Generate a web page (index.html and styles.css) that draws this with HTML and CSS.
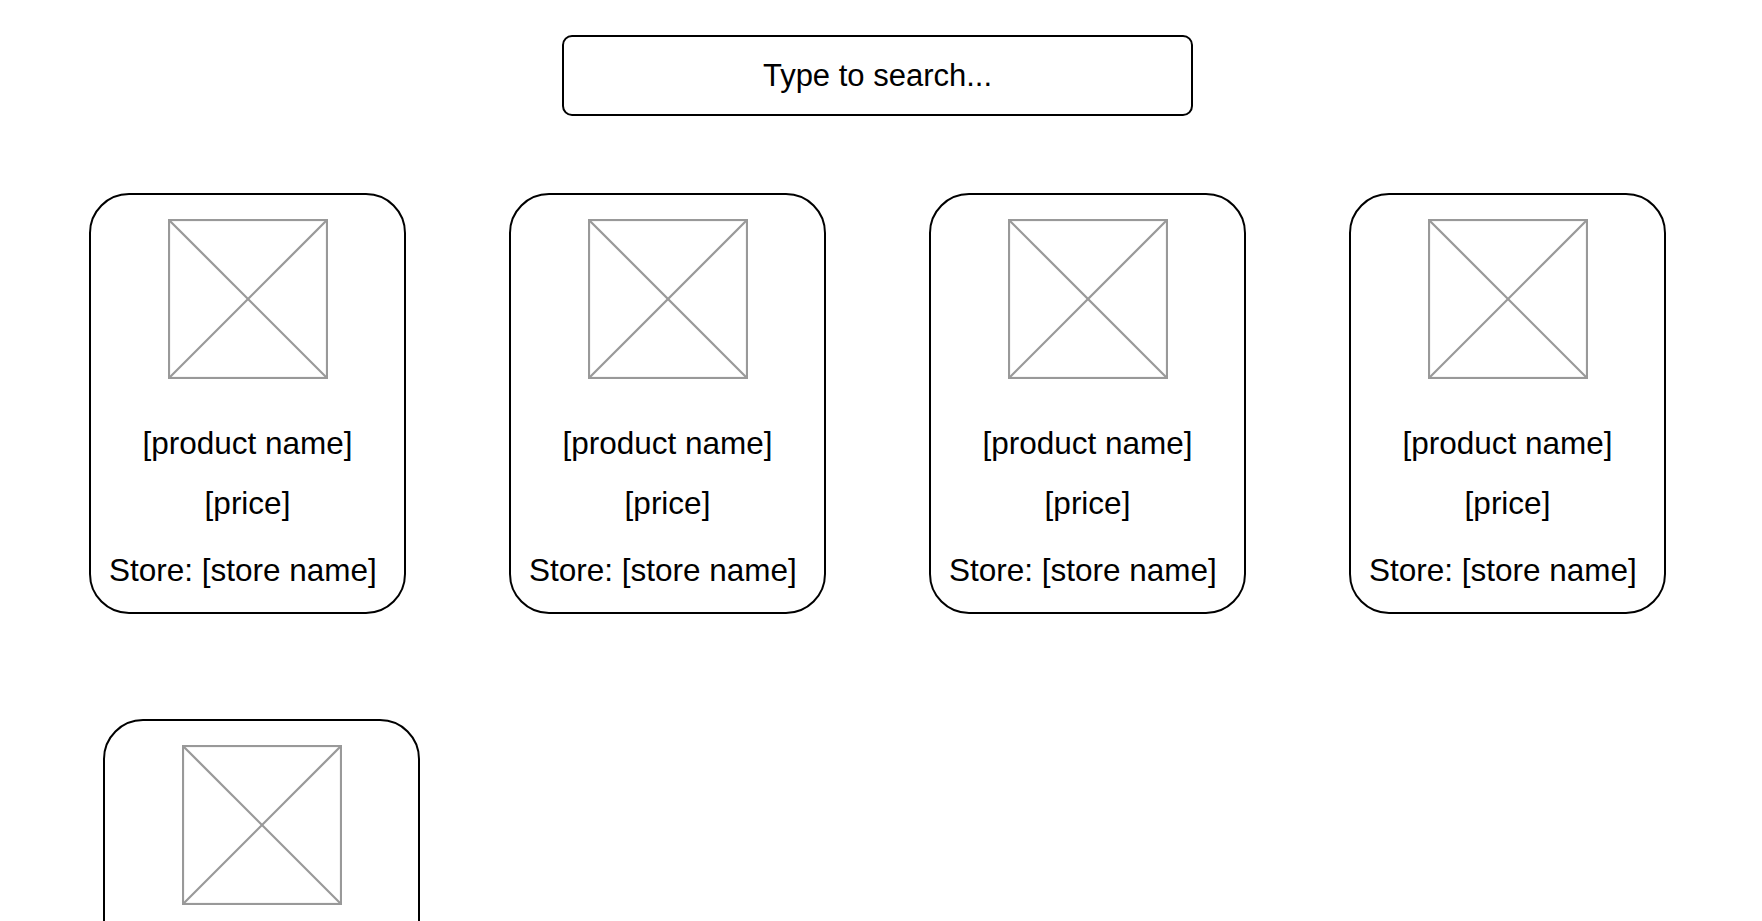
FILE: index.html
```html
<!DOCTYPE html>
<html lang="en">
  <head>
    <meta charset="UTF-8" />
    <meta name="viewport" content="width=device-width, initial-scale=1" />
    <title>Product Search</title>
    <link rel="stylesheet" href="styles.css">
  </head>
  <body>
    <div class="page">
      <div class="search-bar">
        <input type="text" id="search" placeholder="Type to search..." />
      </div>

      <div class="products">
        <div class="card">
          <svg class="thumb" viewBox="0 0 160 160">
            <rect x="1" y="1" width="158" height="158" />
            <line x1="1" y1="1" x2="159" y2="159" />
            <line x1="159" y1="1" x2="1" y2="159" />
          </svg>
          <p class="name">[product name]</p>
          <p class="price">[price]</p>
          <p class="store">Store: [store name]</p>
        </div>

        <div class="card">
          <svg class="thumb" viewBox="0 0 160 160">
            <rect x="1" y="1" width="158" height="158" />
            <line x1="1" y1="1" x2="159" y2="159" />
            <line x1="159" y1="1" x2="1" y2="159" />
          </svg>
          <p class="name">[product name]</p>
          <p class="price">[price]</p>
          <p class="store">Store: [store name]</p>
        </div>

        <div class="card">
          <svg class="thumb" viewBox="0 0 160 160">
            <rect x="1" y="1" width="158" height="158" />
            <line x1="1" y1="1" x2="159" y2="159" />
            <line x1="159" y1="1" x2="1" y2="159" />
          </svg>
          <p class="name">[product name]</p>
          <p class="price">[price]</p>
          <p class="store">Store: [store name]</p>
        </div>

        <div class="card">
          <svg class="thumb" viewBox="0 0 160 160">
            <rect x="1" y="1" width="158" height="158" />
            <line x1="1" y1="1" x2="159" y2="159" />
            <line x1="159" y1="1" x2="1" y2="159" />
          </svg>
          <p class="name">[product name]</p>
          <p class="price">[price]</p>
          <p class="store">Store: [store name]</p>
        </div>

        <div class="card card-next">
          <svg class="thumb" viewBox="0 0 160 160">
            <rect x="1" y="1" width="158" height="158" />
            <line x1="1" y1="1" x2="159" y2="159" />
            <line x1="159" y1="1" x2="1" y2="159" />
          </svg>
          <p class="name">[product name]</p>
          <p class="price">[price]</p>
          <p class="store">Store: [store name]</p>
        </div>
      </div>
    </div>
  </body>
</html>
```

FILE: styles.css
```css
body {
  margin: 0;
  padding: 0;
  background: white;
  font-family: "Liberation Sans", Arial, sans-serif;
  color: #000;
}
.page {
  width: 1577px;
  margin-left: 89px;
  padding-top: 35px;
}

.search-bar {
  display: flex;
  justify-content: center;
}
.search-bar input {
  box-sizing: border-box;
  width: 631px;
  height: 81px;
  border: 2px solid #000;
  border-radius: 10px;
  font-family: inherit;
  font-size: 31px;
  text-align: center;
  color: #000;
  background: white;
  outline: none;
}
.search-bar input::placeholder {
  color: #000;
  opacity: 1;
}

.products {
  display: flex;
  flex-wrap: wrap;
  gap: 105px 103px;
  margin-top: 77px;
}
.card {
  box-sizing: border-box;
  width: 317px;
  height: 421px;
  padding: 24px 18px 23px;
  border: 2px solid #000;
  border-radius: 40px;
  display: flex;
  flex-direction: column;
  align-items: center;
}
.card-next {
  margin-left: 14px;
}
.card .thumb {
  width: 160px;
  height: 160px;
  flex-shrink: 0;
}
.thumb rect,
.thumb line {
  fill: none;
  stroke: #999;
  stroke-width: 2.2;
}
.card p {
  margin: 0;
  font-size: 31.5px;
  line-height: 36px;
  white-space: nowrap;
}
.card .name {
  margin-top: 46px;
}
.card .price {
  margin-top: 24px;
}
.card .store {
  margin-top: 31px;
  align-self: flex-start;
}
```
